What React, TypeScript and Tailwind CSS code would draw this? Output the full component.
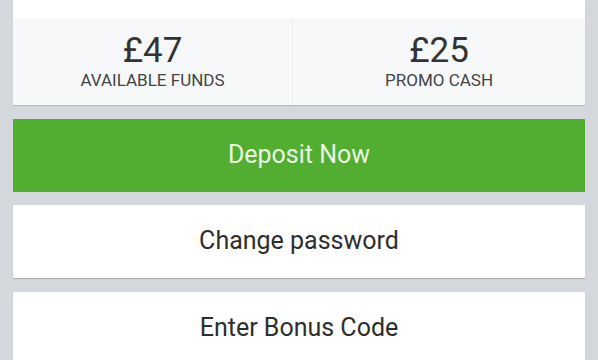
export default function App() {
  const stats = [
    { value: "£47", label: "AVAILABLE FUNDS" },
    { value: "£25", label: "PROMO CASH" },
  ];

  return (
    <div
      className="h-[360px] w-[598px] overflow-hidden bg-[#d4d7db] px-[13px]"
      style={{ fontFamily: "Roboto, 'Noto Sans', sans-serif" }}
    >
      {/* Balance card */}
      <div className="bg-white shadow-[0_1px_1px_rgba(0,0,0,0.12)]">
        <div className="h-[18px]" />
        <div className="grid h-[87px] grid-cols-[280px_1fr] bg-[#f7f8f9]">
          {stats.map((s, idx) => (
            <div
              key={idx}
              className={`flex flex-col items-center justify-center pb-[2px] ${idx === 0 ? "border-r border-[#eceef0]" : ""}`}
            >
              <span className="text-[35px] leading-[38px] text-[#333]">{s.value}</span>
              <span className="text-[17px] leading-[20px] text-[#444]">{s.label}</span>
            </div>
          ))}
        </div>
      </div>

      {/* Deposit */}
      <button className="mt-[14px] flex h-[73px] w-full items-center justify-center bg-[#52ae30] pb-[2px] text-[25px] text-[#eaf6e3]">
        Deposit Now
      </button>

      {/* Actions */}
      <div className="mt-[13px] flex h-[73px] items-center justify-center bg-white pb-[2px] text-[25px] text-[#2e2e2e] shadow-[0_1px_1px_rgba(0,0,0,0.18)]">
        Change password
      </div>
      <div className="mt-[14px] flex h-[73px] items-center justify-center bg-white pb-[2px] text-[25px] text-[#2e2e2e] shadow-[0_1px_1px_rgba(0,0,0,0.18)]">
        Enter Bonus Code
      </div>
    </div>
  );
}
